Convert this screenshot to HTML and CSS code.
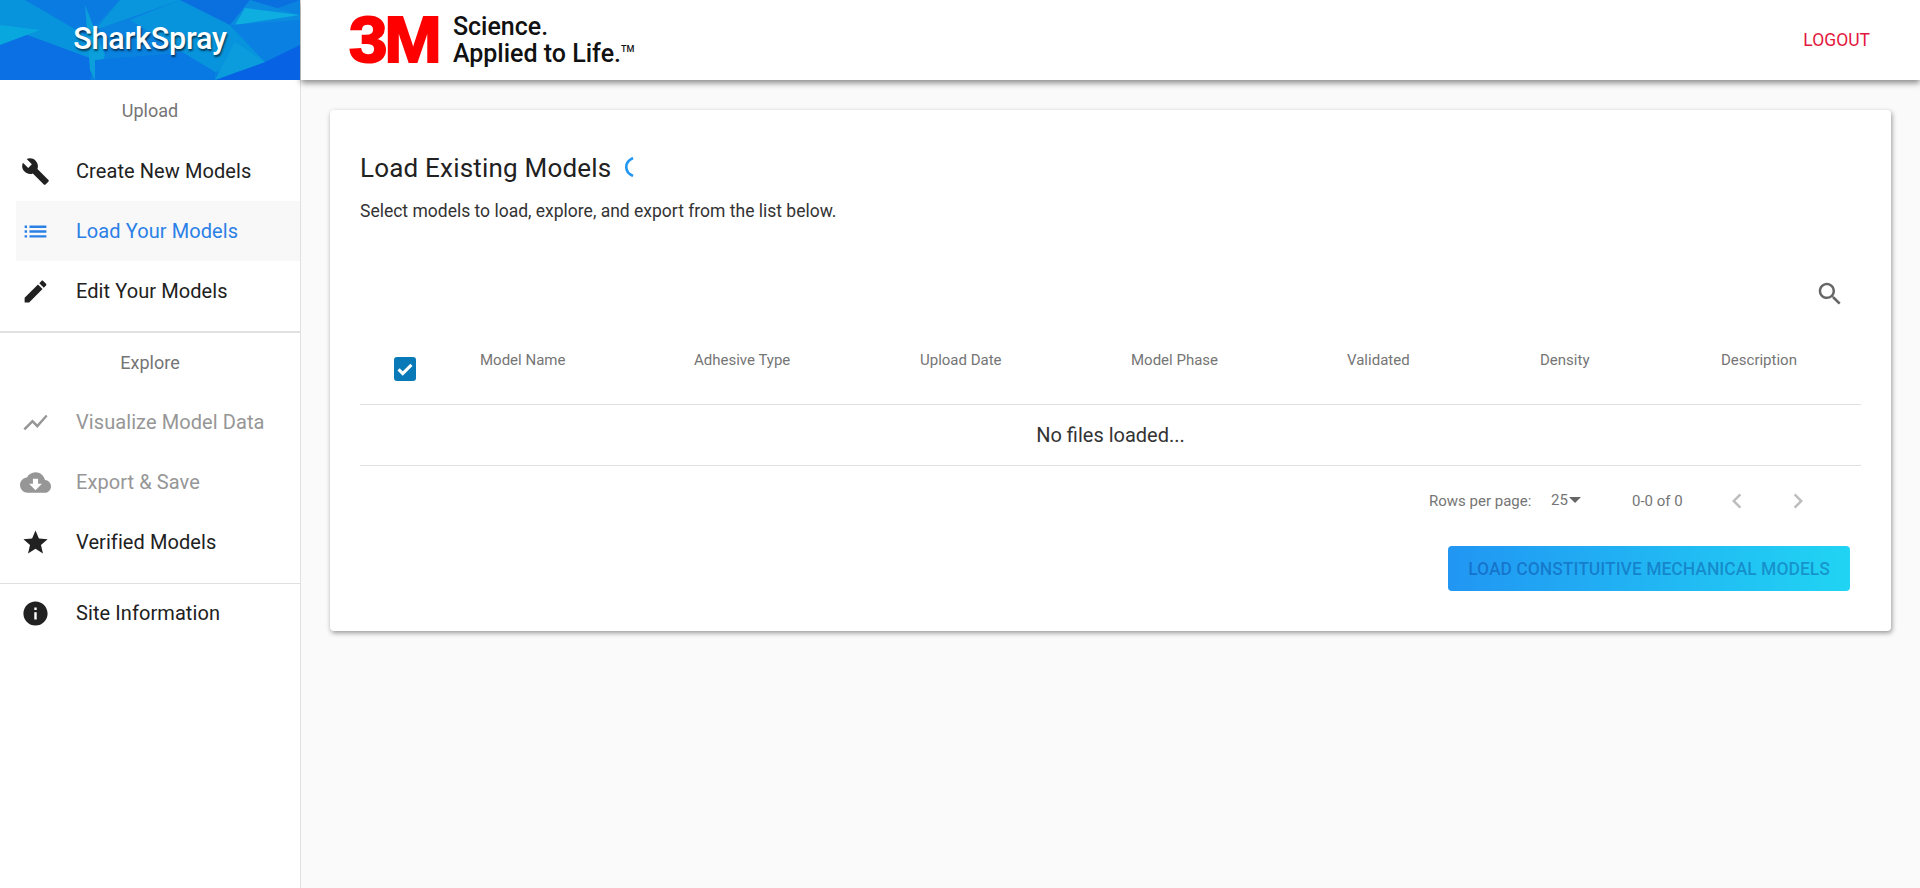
FILE: index.html
```html
<!DOCTYPE html>
<html lang="en">
<head>
    <meta charset="UTF-8">
    <meta name="viewport" content="width=device-width, initial-scale=1.0">
    <title>SharkSpray</title>
    <link rel="stylesheet" href="styles.css">
</head>
<body>
    <div class="app">
        <!-- Sidebar -->
        <aside class="sidebar">
            <div class="brand">
                <svg class="brand-bg" viewBox="0 0 300 80" preserveAspectRatio="none" aria-hidden="true">
                    <rect width="300" height="80" fill="#0a82e0"/>
                    <polygon points="0,0 85,0 95,60 0,25" fill="#0794dc"/>
                    <polygon points="25,0 120,0 85,35" fill="#0a7be0"/>
                    <polygon points="0,25 95,60 90,80 0,80" fill="#0a70e4"/>
                    <polygon points="0,25 40,30 0,45" fill="#08a8de"/>
                    <polygon points="85,5 105,55 95,80 90,70" fill="#0b9fdc"/>
                    <polygon points="95,60 215,50 215,80 95,80" fill="#0878e2"/>
                    <polygon points="120,0 180,0 95,30" fill="#0996dc"/>
                    <polygon points="180,0 230,25 265,62 215,72 130,20" fill="#0794dc"/>
                    <polygon points="180,0 300,0 230,25" fill="#0a70e0"/>
                    <polygon points="250,0 300,15 300,50 230,25" fill="#0a8be0"/>
                    <polygon points="245,8 300,15 235,25" fill="#0eaee0"/>
                    <polygon points="230,25 300,20 300,45 265,62" fill="#0a80e2"/>
                    <polygon points="265,62 300,45 300,80 215,80" fill="#0862e4"/>
                    <polygon points="235,42 265,62 215,80" fill="#0a9cdc"/>
                </svg>
                <span class="brand-name">SharkSpray</span>
            </div>

            <div class="nav-title nav-title-upload">Upload</div>
            <a class="nav-item">
                <svg class="nav-icon" viewBox="0 0 24 24"><path d="M22.7 19l-9.1-9.1c.9-2.3.4-5-1.5-6.9-2-2-5-2.4-7.4-1.3L9 6 6 9 1.600 4.700C.4 7.100.9 10.100 2.900 12.100c1.900 1.900 4.600 2.400 6.900 1.500l9.100 9.100c.4.400 1 .4 1.400 0l2.300-2.300c.5-.4.5-1.100.1-1.400z"/></svg>
                <span>Create New Models</span>
            </a>
            <a class="nav-item active">
                <svg class="nav-icon" viewBox="0 0 24 24"><path d="M3 13h2v-2H3v2zm0 4h2v-2H3v2zm0-8h2V7H3v2zm4 4h14v-2H7v2zm0 4h14v-2H7v2zM7 7v2h14V7H7z"/></svg>
                <span>Load Your Models</span>
            </a>
            <a class="nav-item">
                <svg class="nav-icon" viewBox="0 0 24 24"><path d="M3 17.250V21h3.750L17.810 9.940l-3.750-3.750L3 17.250zM20.710 7.040c.39-.39.39-1.020 0-1.410l-2.340-2.340c-.39-.39-1.020-.39-1.410 0l-1.830 1.830 3.750 3.750 1.830-1.830z"/></svg>
                <span>Edit Your Models</span>
            </a>
            <div class="nav-divider thick"></div>

            <div class="nav-title">Explore</div>
            <a class="nav-item disabled">
                <svg class="nav-icon" viewBox="0 0 24 24"><path d="M3.500 18.490l6-6.010 4 4L22 6.920l-1.410-1.410-7.090 7.970-4-4L2 16.990z"/></svg>
                <span>Visualize Model Data</span>
            </a>
            <a class="nav-item disabled">
                <svg class="nav-icon cloud" viewBox="0 0 24 24"><path d="M19.350 10.040C18.670 6.590 15.640 4 12 4 9.110 4 6.600 5.640 5.350 8.040 2.340 8.360 0 10.910 0 14c0 3.310 2.690 6 6 6h13c2.760 0 5-2.240 5-5 0-2.640-2.050-4.780-4.650-4.960zM17 13l-5 5-5-5h3V9h4v4h3z"/></svg>
                <span>Export &amp; Save</span>
            </a>
            <a class="nav-item">
                <svg class="nav-icon" viewBox="0 0 24 24"><path d="M12 17.270L18.180 21l-1.640-7.030L22 9.240l-7.190-.61L12 2 9.190 8.630 2 9.240l5.460 4.730L5.820 21z"/></svg>
                <span>Verified Models</span>
            </a>
            <div class="nav-divider lower"></div>
            <a class="nav-item info">
                <svg class="nav-icon" viewBox="0 0 24 24"><path d="M12 2C6.480 2 2 6.480 2 12s4.480 10 10 10 10-4.480 10-10S17.520 2 12 2zm1 15h-2v-6h2v6zm0-8h-2V7h2v2z"/></svg>
                <span>Site Information</span>
            </a>
        </aside>

        <div class="main">
            <!-- Top bar -->
            <header class="topbar">
                <div class="logo">
                    <span class="logo-mark">3M</span>
                    <span class="logo-text">Science.<br>Applied to Life.<sup>TM</sup></span>
                </div>
                <a class="logout">LOGOUT</a>
            </header>

            <!-- Card -->
            <section class="card">
                <div class="card-title">
                    <h1>Load Existing Models</h1>
                    <svg class="spinner" viewBox="0 0 12 20"><path d="M10 1C1 5 1 15 10 19" fill="none" stroke="#2196f3" stroke-width="2.600"/></svg>
                </div>
                <p class="card-sub">Select models to load, explore, and export from the list below.</p>

                <div class="toolbar">
                    <svg class="search-icon" viewBox="0 0 24 24"><path d="M15.500 14h-.79l-.28-.27C15.410 12.590 16 11.110 16 9.500 16 5.910 13.090 3 9.500 3S3 5.910 3 9.500 5.910 16 9.500 16c1.610 0 3.090-.59 4.230-1.570l.27.28v.79l5 4.990L20.490 19l-4.990-5zm-6 0C7.010 14 5 11.990 5 9.500S7.010 5 9.500 5 14 7.010 14 9.500 11.990 14 9.500 14z"/></svg>
                </div>

                <div class="table-head">
                    <div class="check-cell">
                        <span class="checkbox">
                            <svg viewBox="0 0 24 24"><path d="M5 12.500l4.500 4.500L19 7.500" fill="none" stroke="#fff" stroke-width="3.400"/></svg>
                        </span>
                    </div>
                    <div>Model Name</div>
                    <div>Adhesive Type</div>
                    <div>Upload Date</div>
                    <div>Model Phase</div>
                    <div>Validated</div>
                    <div>Density</div>
                    <div>Description</div>
                </div>
                <div class="table-empty">No files loaded...</div>

                <div class="pager">
                    <span class="rows-label">Rows per page:</span>
                    <span class="rows-select">25<i class="caret"></i></span>
                    <span class="range">0-0 of 0</span>
                    <svg class="pager-btn" viewBox="0 0 24 24"><path d="M15.410 7.410L14 6l-6 6 6 6 1.410-1.410L10.830 12z"/></svg>
                    <svg class="pager-btn" viewBox="0 0 24 24"><path d="M10 6L8.590 7.410 13.170 12l-4.580 4.590L10 18l6-6z"/></svg>
                </div>

                <div class="actions">
                    <button class="btn-load">LOAD CONSTITUITIVE MECHANICAL MODELS</button>
                </div>
            </section>
        </div>
    </div>
</body>
</html>
```

FILE: styles.css
```css
/* Reset */
html, body {
    margin: 0;
    padding: 0;
    height: 100%;
    font-family: Roboto, "Liberation Sans", sans-serif;
    color: #212121;
    background: #fafafa;
}

.app {
    display: flex;
    height: 888px;
    overflow: hidden;
}

/* Sidebar */
.sidebar {
    width: 300px;
    flex-shrink: 0;
    background: #fff;
    border-right: 1px solid #e0e0e0;
}

.brand {
    position: relative;
    height: 80px;
    display: flex;
    align-items: center;
    justify-content: center;
    overflow: hidden;
}

.brand-bg {
    position: absolute;
    top: 0;
    left: 0;
    width: 100%;
    height: 100%;
}

.brand-name {
    position: relative;
    top: -2px;
    color: #fff;
    font-size: 30.5px;
    font-weight: 500;
    letter-spacing: -0.2px;
    text-shadow: 1px 2px 2px rgba(0, 0, 0, 0.6);
}

.nav-title {
    height: 59px;
    line-height: 60px;
    text-align: center;
    font-size: 18px;
    color: #757575;
}

.nav-title-upload {
    height: 60px;
    margin-top: 1px;
}

.nav-item {
    display: flex;
    align-items: center;
    height: 60px;
    margin-left: 16px;
    padding-left: 5px;
    font-size: 20px;
    letter-spacing: 0.08px;
    color: #212121;
}

.nav-item span {
    margin-left: 26px;
}

.nav-icon {
    width: 29px;
    height: 29px;
    fill: #212121;
    flex-shrink: 0;
}

.nav-item.active {
    background: #f8f8f9;
    color: #2b80e6;
}

.nav-item.active .nav-icon {
    fill: #2b80e6;
}

.nav-item.disabled {
    color: #969696;
}

.nav-item.disabled .nav-icon {
    fill: #969696;
}

.nav-icon.cloud {
    width: 31px;
    height: 31px;
    margin: 0 -1px 0 -1px;
}

.nav-divider {
    height: 1px;
    margin-top: 10px;
    background: #e0e0e0;
}

.nav-divider.thick {
    height: 2px;
}

.nav-divider.lower {
    margin-top: 11px;
}

.nav-item.info {
    height: 58px;
}

/* Main column */
.main {
    flex: 1;
    min-width: 0;
}

.topbar {
    height: 80px;
    display: flex;
    align-items: center;
    justify-content: space-between;
    padding: 0 50px 0 48px;
    background: #fff;
    box-shadow: 0 3px 6px rgba(0, 0, 0, 0.45);
}

.logo {
    display: flex;
    align-items: center;
}

.logo-mark {
    font-family: "Liberation Sans", Arial, sans-serif;
    font-size: 64px;
    font-weight: 700;
    line-height: 1;
    color: #f00;
    letter-spacing: -3px;
    -webkit-text-stroke: 2px #f00;
    transform: scaleX(1.08);
    transform-origin: left center;
    margin-right: 21px;
}

.logo-text {
    font-size: 25px;
    font-weight: 500;
    line-height: 27px;
    color: #111;
}

.logo-text sup {
    font-size: 9px;
    vertical-align: 10px;
    line-height: 0;
}

.logout {
    font-size: 17.500px;
    color: #e4173e;
}

/* Card */
.card {
    margin: 30px 29px 0 29px;
    height: 521px;
    padding: 0 30px;
    box-sizing: border-box;
    background: #fff;
    border-radius: 4px;
    box-shadow: 1px 2px 5px rgba(0, 0, 0, 0.4);
}

.card-title {
    display: flex;
    align-items: center;
    padding-top: 42px;
    height: 32px;
}

.card-title h1 {
    margin: 0;
    font-size: 26px;
    font-weight: 400;
    letter-spacing: 0.2px;
}

.spinner {
    width: 12px;
    height: 20px;
    margin: -2px 0 0 12px;
}

.card-sub {
    margin: 15px 0 0;
    font-size: 17.500px;
    line-height: 24px;
    color: #333;
}

.toolbar {
    display: flex;
    justify-content: flex-end;
    padding: 56px 16px 0 0;
}

.search-icon {
    width: 30px;
    height: 30px;
    fill: #666;
}

/* Table */
.table-head {
    display: grid;
    grid-template-columns: 120px 214px 226px 211px 216px 193px 181px 139px;
    height: 101px;
    box-sizing: border-box;
    padding-top: 31px;
    margin-top: -5px;
    font-size: 15px;
    line-height: 50px;
    color: #757575;
    border-bottom: 1px solid #e0e0e0;
}

.check-cell {
    padding: 22px 0 0 34px;
    line-height: 0;
}

.checkbox {
    display: inline-block;
    width: 22px;
    height: 24px;
    background: #0a79b8;
    border-radius: 3px;
}

.checkbox svg {
    display: block;
    width: 22px;
    height: 24px;
}

.table-empty {
    height: 61px;
    line-height: 60px;
    box-sizing: border-box;
    text-align: center;
    font-size: 20px;
    color: #333;
    border-bottom: 1px solid #e0e0e0;
}

/* Pager */
.pager {
    display: flex;
    align-items: center;
    height: 70px;
    padding-left: 1069px;
    font-size: 15px;
    color: #757575;
}

.rows-label {
    width: 122px;
}

.rows-select {
    display: flex;
    align-items: center;
    width: 81px;
    margin-top: -2px;
}

.caret {
    width: 0;
    height: 0;
    margin-left: 1px;
    border-left: 6px solid transparent;
    border-right: 6px solid transparent;
    border-top: 6px solid #666;
}

.range {
    width: 90px;
}

.pager-btn {
    width: 30px;
    height: 30px;
    fill: #bdbdbd;
    margin-right: 31px;
}

/* Load button */
.actions {
    display: flex;
    justify-content: flex-end;
    padding: 10px 11px 0 0;
}

.btn-load {
    width: 402px;
    height: 45px;
    padding: 0;
    border: none;
    border-radius: 4px;
    background: linear-gradient(90deg, #2196f3, #21d4f3);
    color: rgba(0, 40, 130, 0.35);
    font-family: inherit;
    font-size: 17.500px;
    font-weight: 500;
}
```
